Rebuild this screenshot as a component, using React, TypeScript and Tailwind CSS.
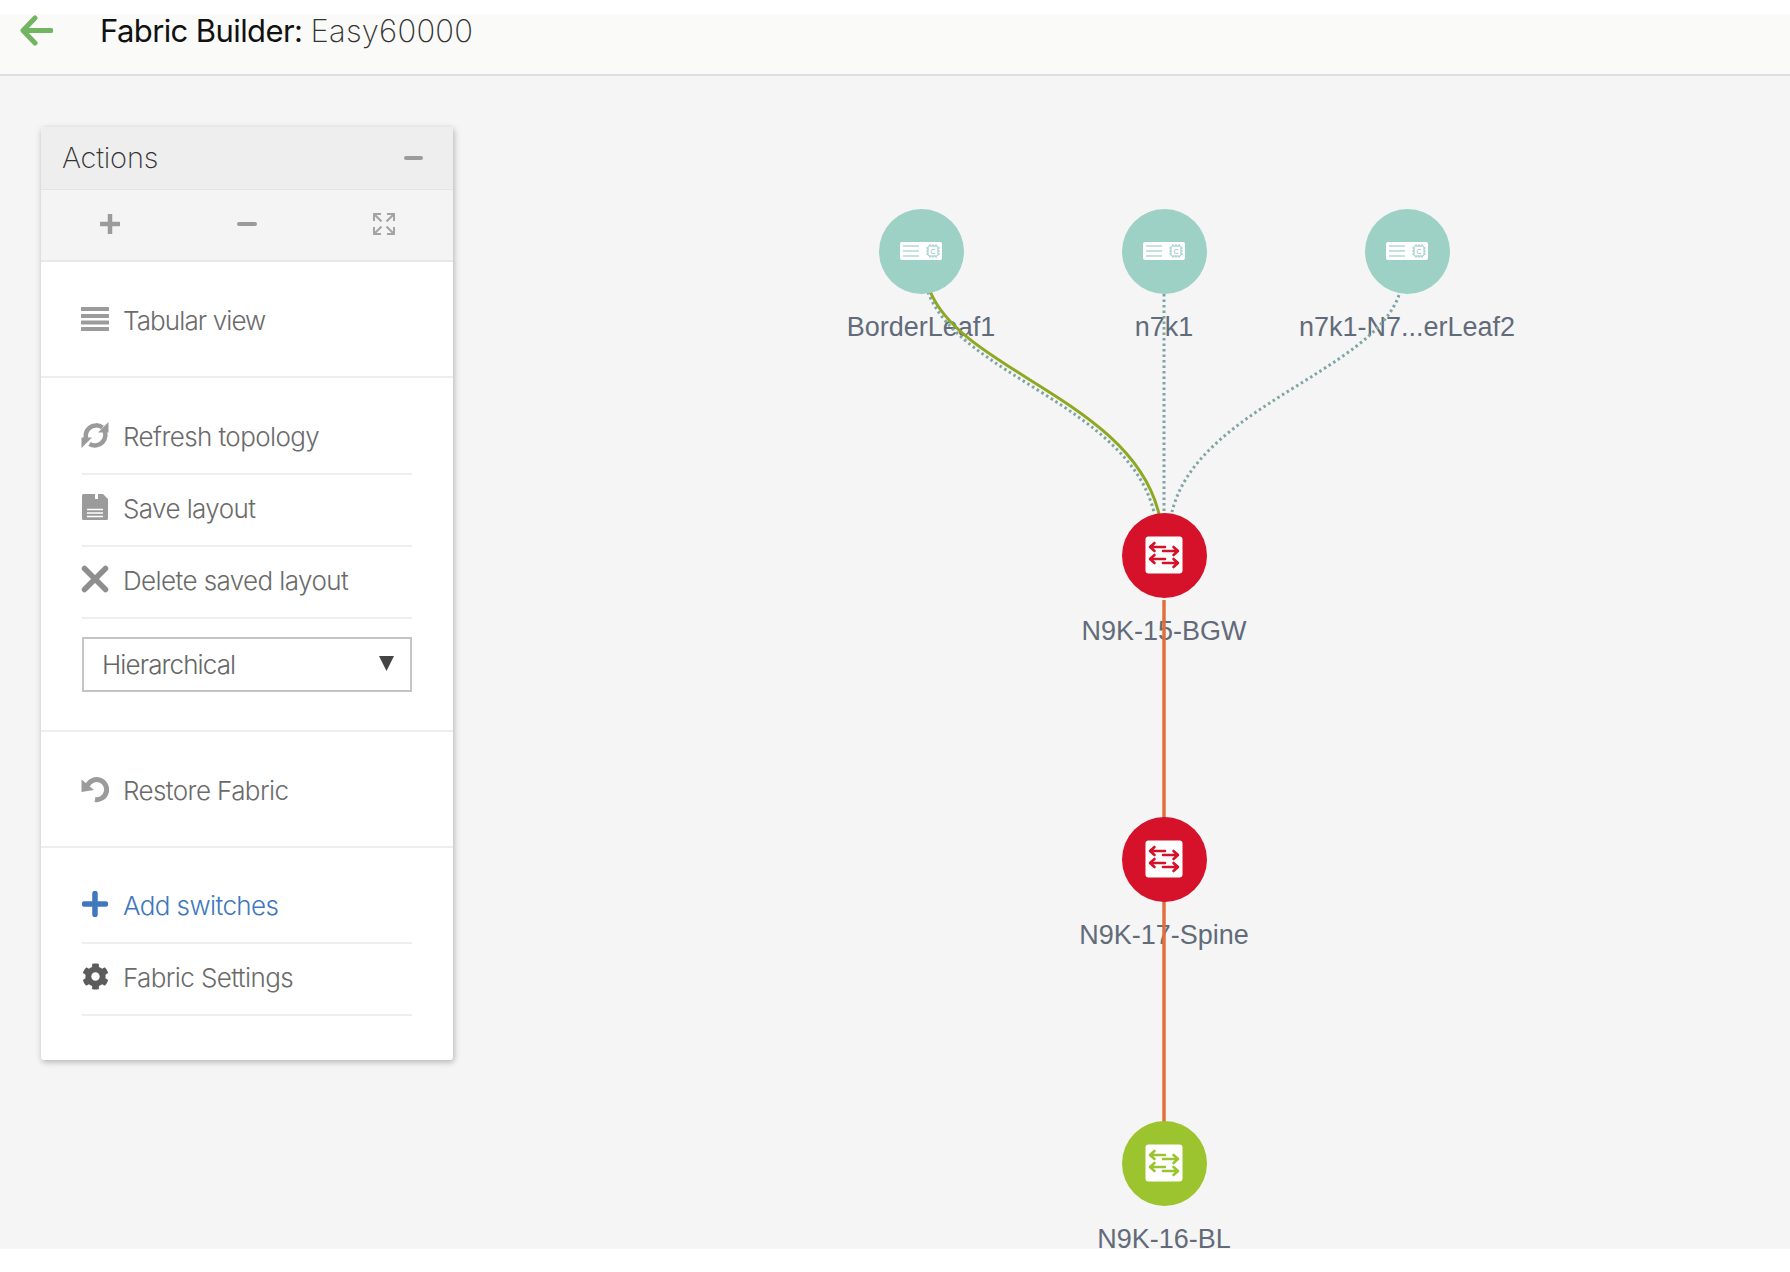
import { ReactNode } from 'react';
import { FaCog } from 'react-icons/fa';

const FONT = 'font-["Inter","Liberation_Sans",sans-serif]';

type NodeKind = 'server' | 'red' | 'green';

const nodes: { id: string; label: string; x: number; y: number; kind: NodeKind }[] = [
  { id: 'a', label: 'BorderLeaf1', x: 921, y: 251, kind: 'server' },
  { id: 'b', label: 'n7k1', x: 1164, y: 251, kind: 'server' },
  { id: 'c', label: 'n7k1-N7...erLeaf2', x: 1407, y: 251, kind: 'server' },
  { id: 'd', label: 'N9K-15-BGW', x: 1164, y: 555, kind: 'red' },
  { id: 'e', label: 'N9K-17-Spine', x: 1164, y: 859, kind: 'red' },
  { id: 'f', label: 'N9K-16-BL', x: 1164, y: 1163, kind: 'green' },
];

function ServerIcon() {
  return (
    <svg width="44" height="20" viewBox="0 0 44 20">
      <rect x="1" y="1" width="42" height="18" rx="2" fill="#fff" />
      <path d="M4 5h16M4 10h16M4 15h16" stroke="#8cc6ba" strokeWidth="1.200" />
      <rect x="29" y="5" width="10" height="10" rx="1.500" fill="none" stroke="#8cc6ba" strokeWidth="1" />
      <path d="M27 7h2M27 10h2M27 13h2M39 7h2M39 10h2M39 13h2M31 3v2M34 3v2M37 3v2M31 15v2M34 15v2M37 15v2" stroke="#8cc6ba" strokeWidth="0.800" />
      <text x="34" y="12.600" textAnchor="middle" fontSize="7" fill="#7fbcb0" fontFamily="Liberation Sans">C</text>
    </svg>
  );
}

function SwitchIcon({ color }: { color: string }) {
  return (
    <svg width="38" height="38" viewBox="0 0 38 38">
      <rect x="0.500" y="0.500" width="37" height="37" rx="3" fill="#fff" />
      <g fill="none" stroke={color} strokeWidth="2.600" strokeLinecap="round" strokeLinejoin="round">
        <path d="M5 11h15M9.500 7 5 11l4.500 4" />
        <path d="M18 15h15M28.500 11l4.500 4-4.500 4" />
        <path d="M5 23h15M9.500 19 5 23l4.500 4" />
        <path d="M18 27h15M28.500 23l4.500 4-4.500 4" />
      </g>
    </svg>
  );
}

function RefreshIcon() {
  return (
    <svg width="28" height="28" viewBox="0 0 28 28" fill="none">
      <path d="M6 20A10.500 10.500 0 0 1 21.500 6.500" stroke="#9b9b9b" strokeWidth="4.500" />
      <path d="M22.500 8A10.500 10.500 0 0 1 8.500 23" stroke="#9b9b9b" strokeWidth="4.500" />
      <path d="M27.500 1v10.500H17z" fill="#9b9b9b" />
      <path d="M0.500 27V16.500H11z" fill="#9b9b9b" />
    </svg>
  );
}

function SaveIcon() {
  return (
    <svg width="28" height="28" viewBox="0 0 28 28">
      <path d="M2.500 1H22l5 5v19.500a1.500 1.500 0 0 1-1.500 1.500h-23A1.500 1.500 0 0 1 1 25.500v-23A1.500 1.500 0 0 1 2.500 1z" fill="#9b9b9b" />
      <rect x="14" y="1" width="3" height="5" fill="#fff" />
      <path d="M6 16.500h16M6 20h16M6 23.500h16" stroke="#fff" strokeWidth="1.500" />
    </svg>
  );
}

function RestoreIcon() {
  return (
    <svg width="28" height="28" viewBox="0 0 28 28" fill="none">
      <path d="M6.500 10.500A10 10 0 1 1 14 24.500" stroke="#9b9b9b" strokeWidth="5" />
      <path d="M0.500 4.500 0.500 17 13 15z" fill="#9b9b9b" />
    </svg>
  );
}

function Row({ icon, children, blue, last, tight }: { icon: ReactNode; children: ReactNode; blue?: boolean; last?: boolean; tight?: boolean }) {
  return (
    <div className={`h-[72px] pb-[3px] flex items-center ${last ? '' : 'border-b-2 border-[#eeeeee]'}`}>
      <span className="w-[28px] h-[28px] flex items-center justify-center -mt-[3px] -ml-[1px]">{icon}</span>
      <span className={`ml-[14px] text-[26px] font-light ${tight ? 'tracking-[-0.9px]' : 'tracking-[-0.6px]'} ${blue ? 'text-[#3f78bd]' : 'text-[#6b6b6b]'}`}>{children}</span>
    </div>
  );
}

function ActionsPanel() {
  return (
    <div className="w-[412px] rounded-[3px] bg-white shadow-[1px_2px_6px_rgba(0,0,0,0.28)] overflow-hidden">
      <div className="h-[63px] bg-[#eeeeee] border-b border-[#e4e4e4] flex items-center justify-between pl-[21px] pr-[30px]">
        <span className="text-[29px] font-extralight text-[#333333] tracking-[-0.2px]">Actions</span>
        <span className="w-[19px] h-[4px] rounded-sm bg-[#9b9b9b]" />
      </div>
      <div className="h-[72px] pb-[3px] bg-[#f4f4f4] border-b-2 border-[#e8e8e8] grid grid-cols-3 items-center">
        <svg className="justify-self-center" width="20" height="20" viewBox="0 0 20 20">
          <path d="M10 1v18M1 10h18" stroke="#9b9b9b" strokeWidth="4.500" strokeLinecap="round" />
        </svg>
        <span className="justify-self-center w-[20px] h-[4px] rounded-sm bg-[#9b9b9b]" />
        <svg className="justify-self-center" width="22" height="22" viewBox="0 0 22 22" fill="none" stroke="#a3a3a3" strokeWidth="2">
          <path d="M1 8V1h7M21 8V1h-7M1 14v7h7M21 14v7h-7" />
          <path d="M2 2l6.500 6.500M20 2l-6.500 6.500M2 20l6.500-6.500M20 20l-6.500-6.500" />
        </svg>
      </div>
      <div className="px-[41px] pt-[24px] pb-[18px] border-b-2 border-[#eeeeee]">
        <Row
          last
          tight
          icon={
            <svg width="28" height="26" viewBox="0 0 28 26">
              <path d="M1 3h26M1 10h26M1 16.500h26M1 23h26" stroke="#9b9b9b" strokeWidth="4" strokeLinecap="round" />
            </svg>
          }
        >
          Tabular view
        </Row>
      </div>
      <div className="px-[41px] pt-[25px] pb-[38px] border-b-2 border-[#eeeeee]">
        <Row icon={<RefreshIcon />}>Refresh topology</Row>
        <Row icon={<SaveIcon />}>Save layout</Row>
        <Row
          icon={
            <svg width="28" height="28" viewBox="0 0 28 28">
              <path d="M3.500 3.500l21 21M24.500 3.500l-21 21" stroke="#8e8e8e" strokeWidth="5.500" strokeLinecap="round" />
            </svg>
          }
        >
          Delete saved layout
        </Row>
        <div className="mt-[18px] h-[55px] border-2 border-[#c4c4c4] flex items-center justify-between pl-[18px] pr-[16px]">
          <span className="text-[26px] font-light text-[#666666] tracking-[-0.9px]">Hierarchical</span>
          <svg className="-mt-[3px]" width="15" height="15" viewBox="0 0 15 15">
            <path d="M0 0h15L7.500 15z" fill="#444444" />
          </svg>
        </div>
      </div>
      <div className="px-[41px] pt-[24px] pb-[18px] border-b-2 border-[#eeeeee]">
        <Row last icon={<RestoreIcon />}>Restore Fabric</Row>
      </div>
      <div className="px-[41px] pt-[24px] pb-[44px]">
        <Row
          blue
          icon={
            <svg width="26" height="26" viewBox="0 0 26 26">
              <path d="M13 2.500v21M2.500 13h21" stroke="#3f78bd" strokeWidth="5.500" strokeLinecap="round" />
            </svg>
          }
        >
          Add switches
        </Row>
        <Row icon={<FaCog size={27} color="#5c5c5c" />}>Fabric Settings</Row>
      </div>
    </div>
  );
}

function Topology() {
  return (
    <div className="absolute left-0 -top-[76px] w-[1790px] h-[1272px]">
      {nodes.map(n => (
        <div
          key={n.id + '-label'}
          className='absolute z-0 -translate-x-1/2 whitespace-nowrap font-["Liberation_Sans",sans-serif] text-[27px] leading-[30px] text-[#626b79]'
          style={{ left: n.x, top: n.y + 61 }}
        >
          {n.label}
        </div>
      ))}
      <svg className="absolute inset-0 z-10" width="1790" height="1272" viewBox="0 0 1790 1272" fill="none">
        <path d="M1164 600V1130" stroke="#e0713f" strokeWidth="3.500" />
        <path d="M1164 294V514" stroke="#7fa5a3" strokeWidth="3" strokeDasharray="2.500 3" />
        <path d="M1399 295C1372 372 1197 408 1172 512" stroke="#7fa5a3" strokeWidth="3" strokeDasharray="2.500 3" />
        <path d="M928 292C959 375 1127 405 1154 512" stroke="#7fa5a3" strokeWidth="3" strokeDasharray="2.500 3" />
        <path d="M930 291C962 371 1132 401 1159 514" stroke="#8fa823" strokeWidth="3" />
      </svg>
      {nodes.map(n => (
        <div
          key={n.id}
          className={`absolute z-20 w-[85px] h-[85px] -ml-[42.500px] -mt-[42.500px] rounded-full flex items-center justify-center ${
            n.kind === 'server' ? 'bg-[#9dd1c6]' : n.kind === 'red' ? 'bg-[#d5122a]' : 'bg-[#9cc42e]'
          }`}
          style={{ left: n.x, top: n.y }}
        >
          {n.kind === 'server' ? <ServerIcon /> : <SwitchIcon color={n.kind === 'red' ? '#d5122a' : '#9cc42e'} />}
        </div>
      ))}
    </div>
  );
}

export default function App() {
  return (
    <div className={`${FONT} w-[1790px] h-[1272px] bg-white flex flex-col overflow-hidden`}>
      <header className="mt-[14px] h-[62px] shrink-0 bg-[#fafaf8] border-b-2 border-[#dedede] flex items-start pl-[20px]">
        <svg className="mt-[1px]" width="33" height="31" viewBox="0 0 33 31" fill="none">
          <path d="M31 15.500H3M15 3 3 15.500 15 28" stroke="#72b561" strokeWidth="5" strokeLinecap="round" strokeLinejoin="round" />
        </svg>
        <h1 className="ml-[47px] mt-[2px] text-[31px] leading-[30px] font-normal text-[#111111] tracking-[-0.6px]">
          Fabric Builder: <span className="font-extralight text-[#333333] tracking-[0.25px]">Easy60000</span>
        </h1>
      </header>
      <main className="relative h-[1173px] shrink-0 bg-[#f5f5f5] overflow-hidden pl-[41px] pt-[51px]">
        <ActionsPanel />
        <Topology />
      </main>
    </div>
  );
}
